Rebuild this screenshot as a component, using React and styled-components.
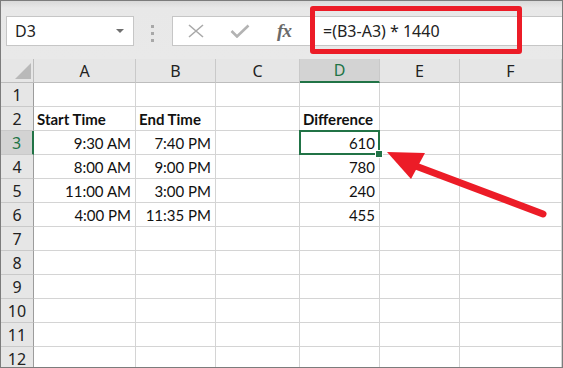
import React from 'react';
import styled, { createGlobalStyle, css } from 'styled-components';

const GlobalStyle = createGlobalStyle`
  html, body {
    margin: 0;
    padding: 0;
    background: #fff;
  }
`;

const GREEN = '#217346';
const RED = '#ec1c27';

const Frame = styled.div`
  position: relative;
  width: 563px;
  height: 368px;
  box-sizing: border-box;
  border: 1px solid #7c7c7c;
  overflow: hidden;
  background: #fff;
  font-family: 'Noto Sans', 'Open Sans', sans-serif;
`;

const Toolbar = styled.div`
  display: flex;
  align-items: flex-start;
  height: 58px;
  box-sizing: border-box;
  padding: 15px 0 0 5px;
  background: linear-gradient(#d9d9d9, #e8e8e8 7px, #e9e9e9);
`;

const NameBox = styled.div`
  display: flex;
  align-items: center;
  justify-content: space-between;
  width: 128px;
  height: 30px;
  box-sizing: border-box;
  padding: 0 9px 0 8px;
  background: #fff;
  border: 1px solid #c6c6c6;
  font-size: 16px;
  color: #222;
`;

const Caret = styled.span`
  width: 0;
  height: 0;
  border-left: 4px solid transparent;
  border-right: 4px solid transparent;
  border-top: 4px solid #6f6f6f;
`;

const Grip = styled.div`
  display: flex;
  flex-direction: column;
  gap: 4px;
  margin: 9px 18px 0 17px;

  span {
    width: 3px;
    height: 3px;
    background: #a8a8a8;
  }
`;

const FormulaBar = styled.div`
  position: relative;
  flex: 1;
  display: flex;
  align-items: center;
  height: 30px;
  box-sizing: border-box;
  background: #fff;
  border: 1px solid #c6c6c6;
  border-right: none;
`;

const IconSlot = styled.div`
  display: flex;
  align-items: center;
  justify-content: center;
  width: ${(p) => p.w}px;
  margin-left: ${(p) => p.ml}px;
`;

const Fx = styled.span`
  font-family: 'Liberation Serif', 'DejaVu Serif', serif;
  font-style: italic;
  font-weight: bold;
  font-size: 19px;
  color: #6a6a6a;
  letter-spacing: -1px;
`;

const FormulaText = styled.span`
  margin-left: 30px;
  font-size: 16px;
  color: #222;
`;

const Highlight = styled.div`
  position: absolute;
  left: 137px;
  top: -11px;
  width: 212px;
  height: 48px;
  box-sizing: border-box;
  border: 5px solid ${RED};
  border-radius: 3px;
`;

const Sheet = styled.div`
  display: grid;
  grid-template-columns: 33px 102px 80px 84px 80px 80px 1fr;
  grid-auto-rows: 24px;
`;

const headerBase = css`
  display: flex;
  align-items: center;
  justify-content: center;
  box-sizing: border-box;
  background: ${(p) => (p.active ? '#d3d3d3' : '#e6e6e6')};
  color: ${(p) => (p.active ? GREEN : '#222')};
  font-size: 16px;
`;

const Corner = styled.div`
  position: relative;
  box-sizing: border-box;
  background: #e6e6e6;
  border-right: 1px solid #bdbdbd;
  border-bottom: 1px solid #bdbdbd;

  &::after {
    content: '';
    position: absolute;
    right: 2px;
    bottom: 3px;
    border-left: 16px solid transparent;
    border-bottom: 16px solid #b9b9b9;
  }
`;

const ColHead = styled.div`
  ${headerBase}
  border-right: 1px solid #c9c9c9;
  border-bottom: ${(p) => (p.active ? `2px solid ${GREEN}` : '1px solid #bdbdbd')};
`;

const RowHead = styled.div`
  ${headerBase}
  border-bottom: 1px solid #c9c9c9;
  border-right: ${(p) => (p.active ? `2px solid ${GREEN}` : '1px solid #9c9c9c')};
  padding-top: 1px;
`;

const Cell = styled.div`
  position: relative;
  display: flex;
  align-items: center;
  justify-content: ${(p) => (p.right ? 'flex-end' : 'flex-start')};
  box-sizing: border-box;
  padding: 1px 4px 0 3px;
  border-right: 1px solid #d4d4d4;
  border-bottom: 1px solid #d4d4d4;
  font-family: Lato, 'Open Sans', sans-serif;
  font-size: 15px;
  font-weight: ${(p) => (p.bold ? 700 : 400)};
  color: #111;
  white-space: nowrap;

  ${(p) =>
    p.selected &&
    css`
      box-shadow: inset 0 0 0 2px ${GREEN};
      margin: -1px 0 0 -1px;
      padding-right: 5px;
      border: none;
      width: calc(100% + 1px);
      height: 25px;

      &::after {
        content: '';
        position: absolute;
        right: -3px;
        bottom: -3px;
        width: 6px;
        height: 6px;
        background: ${GREEN};
        border: 1px solid #fff;
        z-index: 2;
      }
    `}
`;

const Arrow = styled.svg`
  position: absolute;
  left: 0;
  top: 0;
  pointer-events: none;
`;

const columns = ['A', 'B', 'C', 'D', 'E', 'F'];

const data = {
  2: { A: ['Start Time', 'bold'], B: ['End Time', 'bold'], D: ['Difference', 'bold'] },
  3: { A: ['9:30 AM'], B: ['7:40 PM'], D: ['610'] },
  4: { A: ['8:00 AM'], B: ['9:00 PM'], D: ['780'] },
  5: { A: ['11:00 AM'], B: ['3:00 PM'], D: ['240'] },
  6: { A: ['4:00 PM'], B: ['11:35 PM'], D: ['455'] },
};

const rows = [1, 2, 3, 4, 5, 6, 7, 8, 9, 10, 11, 12];

export default function App() {
  return (
    <>
      <GlobalStyle />
      <Frame>
        <Toolbar>
          <NameBox>
            D3
            <Caret />
          </NameBox>
          <Grip>
            <span />
            <span />
            <span />
          </Grip>
          <FormulaBar>
            <IconSlot w={18} ml={14}>
              <svg width="18" height="14" viewBox="0 0 18 14">
                <path d="M2 1 L16 13 M16 1 L2 13" stroke="#a9a9a9" strokeWidth="1.6" fill="none" />
              </svg>
            </IconSlot>
            <IconSlot w={20} ml={25}>
              <svg width="20" height="14" viewBox="0 0 20 14">
                <path d="M1.5 7 L7 12.5 L18.5 1.5" stroke="#b3b3b3" strokeWidth="2.6" fill="none" />
              </svg>
            </IconSlot>
            <IconSlot w={18} ml={25}>
              <Fx>fx</Fx>
            </IconSlot>
            <FormulaText>=(B3-A3) * 1440</FormulaText>
            <Highlight />
          </FormulaBar>
        </Toolbar>
        <Sheet>
          <Corner />
          {columns.map((c) => (
            <ColHead key={c} active={c === 'D'}>
              {c}
            </ColHead>
          ))}
          {rows.map((r) => (
            <React.Fragment key={r}>
              <RowHead active={r === 3}>{r}</RowHead>
              {columns.map((c) => {
                const v = data[r] && data[r][c];
                return (
                  <Cell
                    key={c}
                    bold={v && v[1] === 'bold'}
                    right={v && v[1] !== 'bold'}
                    selected={r === 3 && c === 'D'}
                  >
                    {v ? v[0] : ''}
                  </Cell>
                );
              })}
            </React.Fragment>
          ))}
        </Sheet>
        <Arrow width="563" height="368" viewBox="0 0 563 368">
          <line x1="542" y1="213" x2="412" y2="164" stroke={RED} strokeWidth="7" strokeLinecap="round" />
          <polygon points="386,151 424,152 410,178" fill={RED} />
        </Arrow>
      </Frame>
    </>
  );
}
